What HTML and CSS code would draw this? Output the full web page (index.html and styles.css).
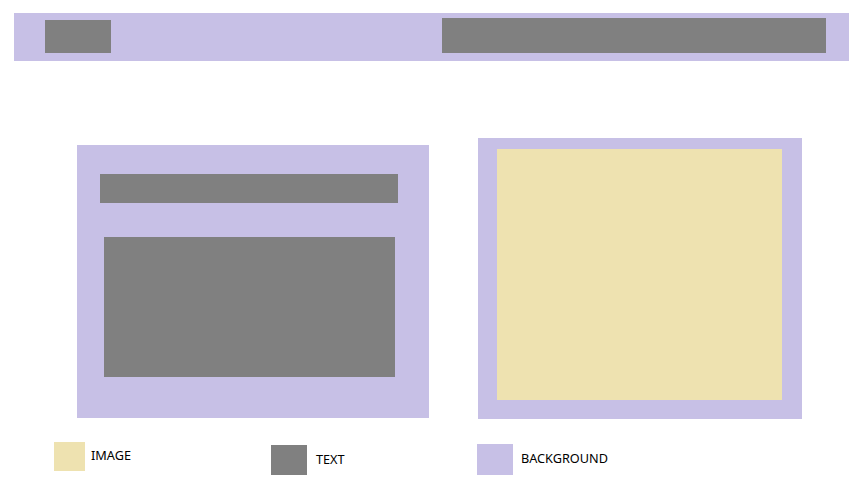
FILE: index.html
```html
<!DOCTYPE html>
<html lang="en">
<head>
  <meta charset="UTF-8" />
  <meta name="viewport" content="width=device-width, initial-scale=1.0" />
  <title>Layout Wireframe</title>
  <link rel="stylesheet" href="styles.css">
</head>
<body>
  <div class="page">
    <header class="top-bar">
      <div class="block text logo"></div>
      <div class="block text nav"></div>
    </header>

    <div class="cards">
      <div class="card card-left">
        <div class="block text title-bar"></div>
        <div class="block text body-block"></div>
      </div>
      <div class="card card-right">
        <div class="block image picture"></div>
      </div>
    </div>

    <div class="legend">
      <div class="legend-item item-image">
        <span class="swatch image"></span>
        <span class="label">IMAGE</span>
      </div>
      <div class="legend-item item-text">
        <span class="swatch text"></span>
        <span class="label">TEXT</span>
      </div>
      <div class="legend-item item-bg">
        <span class="swatch bg"></span>
        <span class="label">BACKGROUND</span>
      </div>
    </div>
  </div>
</body>
</html>
```

FILE: styles.css
```css
* {
  box-sizing: border-box;
  margin: 0;
  padding: 0;
}

body {
  background: #ffffff;
  font-family: 'Noto Sans', 'Open Sans', sans-serif;
  color: #000000;
}

.page {
  padding: 13px 19px 0 14px;
}

.text {
  background: #808080;
}

.image {
  background: #eee2b0;
}

.bg,
.top-bar,
.card {
  background: #c7c0e6;
}

.top-bar {
  height: 48px;
  display: flex;
  justify-content: space-between;
  align-items: flex-end;
  padding: 0 23px 8px 31px;
}

.logo {
  width: 66px;
  height: 33px;
}

.nav {
  width: 384px;
  height: 35px;
}

.cards {
  display: flex;
  align-items: flex-start;
  gap: 49px;
  margin: 77px 0 0 63px;
}

.card-left {
  width: 352px;
  height: 273px;
  margin-top: 7px;
  padding: 29px 31px 0 23px;
}

.title-bar {
  height: 29px;
}

.body-block {
  height: 140px;
  margin: 34px 3px 0 4px;
}

.card-right {
  width: 324px;
  height: 281px;
  padding: 11px 20px 0 19px;
}

.picture {
  height: 251px;
}

.legend {
  display: flex;
  align-items: flex-start;
  margin-top: 23px;
  padding-left: 40px;
}

.legend-item {
  display: flex;
  align-items: center;
  font-size: 12.7px;
}

.swatch {
  display: block;
}

.label {
  margin-bottom: 3px;
}

.item-image {
  width: 217px;
  gap: 6px;
}

.item-image .swatch {
  width: 31px;
  height: 29px;
}

.item-text {
  width: 206px;
  gap: 9px;
  margin-top: 3px;
}

.item-text .swatch {
  width: 36px;
  height: 30px;
}

.item-bg {
  gap: 8px;
  margin-top: 2px;
}

.item-bg .swatch {
  width: 36px;
  height: 31px;
}
```
